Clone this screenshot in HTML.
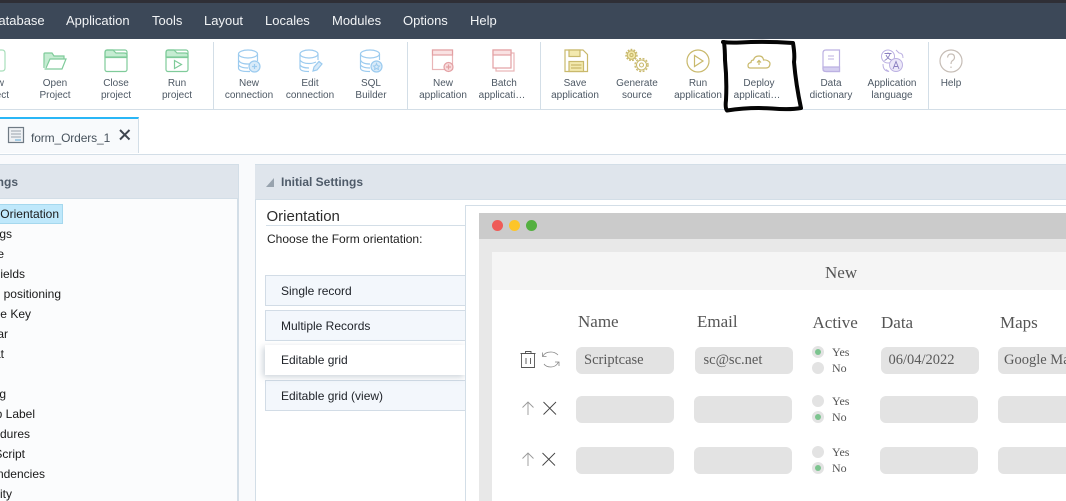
<!DOCTYPE html>
<html><head><meta charset="utf-8">
<style>
*{box-sizing:border-box}
html,body{margin:0;padding:0;width:1066px;height:501px;overflow:hidden}
body{position:relative;background:#f9fafc;font-family:"Liberation Sans",sans-serif}
.a{position:absolute;white-space:nowrap}
.nav{top:13px;font-size:13px;line-height:16px;color:#f2f4f6}
.tb{font-size:10px;line-height:12px;color:#4d5864;text-align:center;top:78px;width:70px}
.tb span{position:relative;left:-2px}
.sep{position:absolute;top:42px;height:67px;width:1px;background:#d3dee7}
svg{position:absolute;overflow:visible}
.li{font-size:12px;line-height:14px;color:#1a1a1a}
.opt{position:absolute;left:265px;width:201px;height:31px;background:#f3f7fc;border:1px solid #d2dce6;border-right:0;font-size:12px;line-height:30px;padding-left:15px;color:#20242a}
.s{font-family:"Liberation Serif",serif;color:#555}
.h{font-size:17px;line-height:18px;top:313px}
.f{position:absolute;height:27px;width:98px;background:#e3e3e3;border-radius:6px}
.ft{font-family:"Liberation Serif",serif;font-size:14.500px;color:#5a5a5a;line-height:27px}
.r{position:absolute;width:12px;height:12px;border-radius:50%;background:#e3e3e3}
.r.on::after{content:"";position:absolute;left:3px;top:3px;width:6px;height:6px;border-radius:50%;background:#7cc48f}
.y{font-family:"Liberation Serif",serif;font-size:12px;line-height:14px;color:#555}
</style></head><body>
<div class="a" style="left:0;top:0;width:1066px;height:39px;background:#3c4858"></div>
<div class="a" style="left:0;top:0;width:1066px;height:3px;background:#2f2f36"></div>
<div class="a nav" style="left:-11px">Database</div>
<div class="a nav" style="left:66px">Application</div>
<div class="a nav" style="left:152px">Tools</div>
<div class="a nav" style="left:204px">Layout</div>
<div class="a nav" style="left:265px">Locales</div>
<div class="a nav" style="left:332px">Modules</div>
<div class="a nav" style="left:403px">Options</div>
<div class="a nav" style="left:470px">Help</div>

<div class="a" style="left:0;top:39px;width:1066px;height:71px;background:#fff;border-bottom:1px solid #d3dee7"></div>
<div class="sep" style="left:213px"></div><div class="sep" style="left:407px"></div><div class="sep" style="left:540px"></div><div class="sep" style="left:928px"></div>

<div class="a tb" style="left:-41px">New<br>project</div>
<div class="a tb" style="left:20px">Open<br>Project</div>
<div class="a tb" style="left:81px">Close<br>project</div>
<div class="a tb" style="left:142px">Run<br>project</div>
<div class="a tb" style="left:214px">New<br>connection</div>
<div class="a tb" style="left:275px">Edit<br>connection</div>
<div class="a tb" style="left:336px">SQL<br>Builder</div>
<div class="a tb" style="left:408px">New<br>application</div>
<div class="a tb" style="left:469px">Batch<br><span>applicati&hellip;</span></div>
<div class="a tb" style="left:540px">Save<br>application</div>
<div class="a tb" style="left:602px">Generate<br>source</div>
<div class="a tb" style="left:663px">Run<br>application</div>
<div class="a tb" style="left:724px">Deploy<br><span>applicati&hellip;</span></div>
<div class="a tb" style="left:796px">Data<br>dictionary</div>
<div class="a tb" style="left:857px">Application<br>language</div>
<div class="a tb" style="left:916px">Help</div>

<svg style="left:0;top:0" width="1066" height="110" fill="none" stroke-width="1.2">
<g stroke="#7fcb9a">
<path d="M-6 50H2Q5 50 5 53V68Q5 71 2 71H-6" stroke="#a8dfba"/>
<path d="M44 53H52L54 56H64V59H50L45 68Z" fill="#c5ecd2" stroke="none"/>
<path d="M44 68V54Q44 53 45 53H52L54 56H64V59"/>
<path d="M44.500 69H62L66 59H50L46 68"/>
<path d="M105 57V53Q105 50 107 50H113L116 53H124Q127 53 127 55V57Z" fill="#c5ecd2"/>
<rect x="105" y="50" width="22" height="21.500" rx="2"/>
<path d="M105 57.500H127"/>
<path d="M166 57V53Q166 50 168 50H174L177 53H185Q188 53 188 55V57Z" fill="#c5ecd2"/>
<rect x="166" y="50" width="22" height="21.500" rx="2"/>
<path d="M166 57.500H188M174.500 60.500V68.500L181.500 64.500Z"/>
</g>
<g stroke="#9ccbef">
<ellipse cx="248" cy="54" rx="9.500" ry="4"/><path d="M238.500 54V68Q238.500 71.500 248 71.500H250M257.500 54V61M238.500 60Q240 64 248 64H250M238.500 65Q241 68 248 68"/>
<circle cx="254.500" cy="66.500" r="5.500" fill="#d9ebf9"/><path d="M254.500 64V69M252 66.500H257"/>
<ellipse cx="309" cy="54" rx="9" ry="4"/><path d="M300 54V68Q300 71.500 309 71.500M318 54V60M300 60Q302 63.500 309 63.500Q313 63.500 316 62M300 65Q302 68 309 68"/>
<path d="M313 71L314 67L319 61.500L322 64L317 70Z" fill="#d9ebf9"/>
<ellipse cx="370" cy="54" rx="9.500" ry="4"/><path d="M360.500 54V68Q360.500 71.500 370 71.500M379.500 54V60M360.500 60Q362 64 370 64M360.500 65Q363 68 370 68"/>
<circle cx="376.500" cy="66.500" r="5.500" fill="#d9ebf9"/><path d="M376.500 63.500L377.400 65.700L379.500 66L378 67.500L378.400 69.500L376.500 68.500L374.600 69.500L375 67.500L373.500 66L375.600 65.700Z" stroke-width="1"/>
</g>
<g stroke="#e3a0a3">
<rect x="432.500" y="50" width="20" height="19.500" stroke="#e9b5b7"/>
<rect x="432.500" y="50" width="20" height="5" fill="#f9e2e3"/>
<circle cx="448.500" cy="67" r="4.500" fill="#f8dcdd"/><path d="M448.500 64.500V69.500M446 67H451"/>
<rect x="496" y="53" width="18" height="18" stroke="#e8b4b6"/>
<rect x="493" y="50" width="18" height="18" fill="#fff"/>
<rect x="493" y="50" width="18" height="5" fill="#f9e2e3"/>
</g>
<g stroke="#c9b96c">
<path d="M565 50H583L587.500 54.500V71.500H565Z"/>
<rect x="569" y="50" width="11" height="6.500" fill="#f3e9ae"/>
<rect x="569" y="61.500" width="14.500" height="10" fill="#f3e9ae"/>
<path d="M571 65H581.500M571 68H581.500"/>
<g stroke-width="1.100">
<circle cx="631.500" cy="55" r="4.300" fill="#f3e9ae"/><circle cx="631.500" cy="55" r="1.600"/>
<circle cx="631.500" cy="55" r="5.500" stroke-dasharray="1.800 1.300" stroke-width="1.400"/>
<circle cx="641.500" cy="65" r="5" fill="#fff"/><circle cx="641.500" cy="65" r="2"/>
<circle cx="641.500" cy="65" r="6.500" stroke-dasharray="2 1.500" stroke-width="1.400"/>
</g>
<circle cx="698" cy="61" r="11"/><path d="M694.500 55.500V66.500L703 61Z"/>
<path d="M755 68H750Q748 68 748 65.500Q748 63 751 62.500Q751 60 753.500 60Q754.500 56 759 56Q763 56 763.500 60Q768 59.500 770 63Q770 68 766 68Z"/>
<path d="M759 65V61M757 62.500L759 60.500L761 62.500"/>
</g>
<g stroke="#bcb1e2">
<path d="M823 53Q823 50 826 50H839.500V71.500H826Q823 71.500 823 69Z"/>
<path d="M823 67H839.500V71.500H826Q823 71.500 823 69Z" fill="#d5cff0"/>
<path d="M828 56H834M828 59H834" stroke-width="1"/>
<circle cx="888" cy="56.500" r="6.500" stroke-width="1"/>
<circle cx="896" cy="65" r="6.500" fill="#ece8f8" stroke-width="1"/>
<path d="M884.500 53.500H891.500M888 52.500V53.500M890 54Q888 59 884.500 60.500M886 55Q888 59 891.500 60" stroke="#8a7fc0" stroke-width=".9"/>
<path d="M893 69L896 61.500L899 69M894 66.500H898" stroke="#8a7fc0" stroke-width=".9"/>
<path d="M896 50L899 53Q903 53 903 58M883 64Q883 71 889 71.500L886 69.500" stroke-width="1"/>
</g>
<circle cx="951" cy="61" r="11" stroke="#c6bdb6"/>
<path d="M947.500 57.500Q948 54 951 54Q954.500 54 954.500 57.500Q954.500 59.500 952 61Q951 62 951 64M951 66.500V68" stroke="#c6bdb6"/>
</svg>

<div class="a" style="left:0;top:110px;width:1066px;height:45px;background:#fff;border-bottom:1px solid #d3dee7"></div>
<div class="a" style="left:0;top:117px;width:139px;height:36px;background:#f8fafc;border-top:2px solid #29b6f6;border-right:1px solid #d3dee7"></div>
<svg style="left:0;top:0" width="140" height="155" fill="none">
<rect x="8.500" y="127.500" width="15" height="15" fill="#eef1f4" stroke="#6f7a84" stroke-width="1.200"/>
<path d="M11 131H21M11 134H21M11 137H21" stroke="#9aa3ab"/><path d="M15 140H21" stroke="#5aa7d6"/>
<path d="M120 130L129.500 139.500M129.500 130L120 139.500" stroke="#3f4650" stroke-width="2"/>
</svg>
<div class="a" style="left:31px;top:131px;font-size:12px;line-height:14px;color:#47525c;letter-spacing:-.12px">form_Orders_1</div>

<div class="a" style="left:-1px;top:164px;width:240px;height:337px;background:#fbfcfd;border:1px solid #d3dee7;border-right-width:2px;border-bottom:0"></div>
<div class="a" style="left:0;top:165px;width:238px;height:34px;background:#dfe5ec;border-bottom:1px solid #d3dee7"></div>
<div class="a" style="right:1048px;top:175px;font-size:12px;line-height:14px;font-weight:bold;color:#4f5b69">Settings</div>
<div class="a" style="left:-1px;top:204px;width:64px;height:20px;background:#bfe8fb;border:1px solid #a5d8ee"></div>
<div class="a li" style="right:1007px;top:207px">Orientation</div>
<div class="a li" style="right:1054px;top:227px">Settings</div>
<div class="a li" style="right:1062px;top:247px">Title</div>
<div class="a li" style="right:1041px;top:267px">Fields</div>
<div class="a li" style="right:1005px;top:287px">Fields positioning</div>
<div class="a li" style="right:1035px;top:307px">Unique Key</div>
<div class="a li" style="right:1058px;top:327px">Toolbar</div>
<div class="a li" style="right:1062px;top:347px">Format</div>
<div class="a li" style="right:1060px;top:387px">Editing</div>
<div class="a li" style="right:1031px;top:407px">Group Label</div>
<div class="a li" style="right:1036px;top:427px">Procedures</div>
<div class="a li" style="right:1041px;top:447px">JavaScript</div>
<div class="a li" style="right:1021px;top:467px">Dependencies</div>
<div class="a li" style="right:1054px;top:487px">Security</div>

<div class="a" style="left:255px;top:164px;width:811px;height:337px;background:#fff;border:1px solid #d3dee7;border-bottom:0;border-right:0"></div>
<div class="a" style="left:255px;top:165px;width:811px;height:35px;background:#dfe5ec;border-bottom:1px solid #d3dee7"></div>
<svg style="left:0;top:0" width="300" height="200"><path d="M266 187H274V178Z" fill="#98a3ae"/></svg>
<div class="a" style="left:281px;top:175px;font-size:12px;line-height:14px;font-weight:bold;color:#4f5b69">Initial Settings</div>
<div class="a" style="left:266.500px;top:208px;font-size:15px;line-height:18px;color:#2c2c2c">Orientation</div>
<div class="a" style="left:266px;top:225px;width:199px;height:1px;background:#d3dee7"></div>
<div class="a" style="left:267px;top:232px;font-size:12px;line-height:14px;color:#1f1f1f">Choose the Form orientation:</div>
<div class="opt" style="top:275px">Single record</div>
<div class="opt" style="top:310px">Multiple Records</div>
<div class="opt" style="top:345px;height:30px;background:#fff;box-shadow:-2px 2px 6px rgba(110,130,150,.35);border:0;padding:0 0 0 16px;z-index:2">Editable grid</div>
<div class="opt" style="top:380px">Editable grid (view)</div>

<div class="a" style="left:465px;top:205px;width:601px;height:296px;background:#fff;border-left:1px solid #d3dee7;border-top:1px solid #d3dee7;z-index:3"></div>
<div class="a" style="left:479px;top:213px;width:587px;height:288px;background:#e8e8e8;z-index:3"></div>
<div class="a" style="left:479px;top:213px;width:587px;height:26px;background:#cbcbcb;z-index:3"></div>
<div class="a" style="left:492px;top:252px;width:574px;height:249px;background:#fff;z-index:3"></div>
<div class="a" style="left:492px;top:252px;width:574px;height:38px;background:#f5f5f5;z-index:3"></div>
<div id="p" style="position:absolute;left:0;top:0;width:1066px;height:501px;z-index:4;overflow:hidden">
<div class="a" style="left:492px;top:220px;width:11px;height:11px;border-radius:50%;background:#ef5b57"></div>
<div class="a" style="left:509px;top:220px;width:11px;height:11px;border-radius:50%;background:#fdc528"></div>
<div class="a" style="left:526px;top:220px;width:11px;height:11px;border-radius:50%;background:#54b040"></div>
<div class="a s" style="left:825px;top:264px;font-size:17px;line-height:18px">New</div>
<div class="a s h" style="left:578px">Name</div>
<div class="a s h" style="left:697px">Email</div>
<div class="a s h" style="left:812.500px;top:314px">Active</div>
<div class="a s h" style="left:881px;top:314px">Data</div>
<div class="a s h" style="left:1000px;top:314px">Maps</div>

<div class="f ft" style="left:576px;top:347px;padding-left:8px">Scriptcase</div>
<div class="f ft" style="left:694.500px;top:347px;padding-left:9px">sc@sc.net</div>
<div class="f ft" style="left:880.500px;top:347px;padding-left:8px">06/04/2022</div>
<div class="f ft" style="left:998px;top:347px;padding-left:6px;width:110px;white-space:nowrap;overflow:hidden;font-size:14.500px;line-height:26px">Google Maps</div>
<div class="f" style="left:576px;top:396px"></div><div class="f" style="left:694px;top:396px"></div><div class="f" style="left:880px;top:396px"></div><div class="f" style="left:998px;top:396px;width:100px"></div>
<div class="f" style="left:576px;top:447px"></div><div class="f" style="left:694px;top:447px"></div><div class="f" style="left:880px;top:447px"></div><div class="f" style="left:998px;top:447px;width:100px"></div>

<div class="r on" style="left:812px;top:346px"></div><div class="r" style="left:812px;top:362px"></div>
<div class="r" style="left:812px;top:395px"></div><div class="r on" style="left:812px;top:411px"></div>
<div class="r" style="left:812px;top:446px"></div><div class="r on" style="left:812px;top:462px"></div>
<div class="a y" style="left:832px;top:345px">Yes</div><div class="a y" style="left:832px;top:361px">No</div>
<div class="a y" style="left:832px;top:394px">Yes</div><div class="a y" style="left:832px;top:410px">No</div>
<div class="a y" style="left:832px;top:445px">Yes</div><div class="a y" style="left:832px;top:461px">No</div>

<svg style="left:0;top:0" width="600" height="501" fill="none" stroke="#555" stroke-width=".9">
<path d="M520.500 353.500H535.500M521.500 353.500V367.500H534.500V353.500M525.500 353.500V351.500H531V353.500M526 358V364M530.500 358V364"/>
<path d="M543 356Q545 352 551 352Q555 352 558 355M542.500 352.500V356.500H546.500M558.500 362Q556 367 551 367Q546 367 544 364M559 366V362H555" stroke="#888" stroke-width=".8"/>
<path d="M528 415V402M522.500 407.500L528 402L533.500 407.500" stroke="#999"/>
<path d="M543.500 402L556 414.500M556 402L543.500 414.500" stroke="#444"/>
<path d="M528 466V453M522.500 458.500L528 453L533.500 458.500" stroke="#999"/>
<path d="M542.500 453L555 465.500M555 453L542.500 465.500" stroke="#444"/>
</svg>
</div>

<svg style="left:0;top:0;z-index:6" width="1066" height="501" fill="none">
<path d="M723 42Q730 43 740 42.500Q765 41 793 43Q795 55 794 62Q796 85 801 108Q790 110 772 108.500Q750 107 727 110.500Q725 108 726 100Q727 80 725 60Q725 50 724 42" stroke="#050505" stroke-width="4" stroke-linejoin="round" stroke-linecap="round"/>
</svg>
</body></html>
